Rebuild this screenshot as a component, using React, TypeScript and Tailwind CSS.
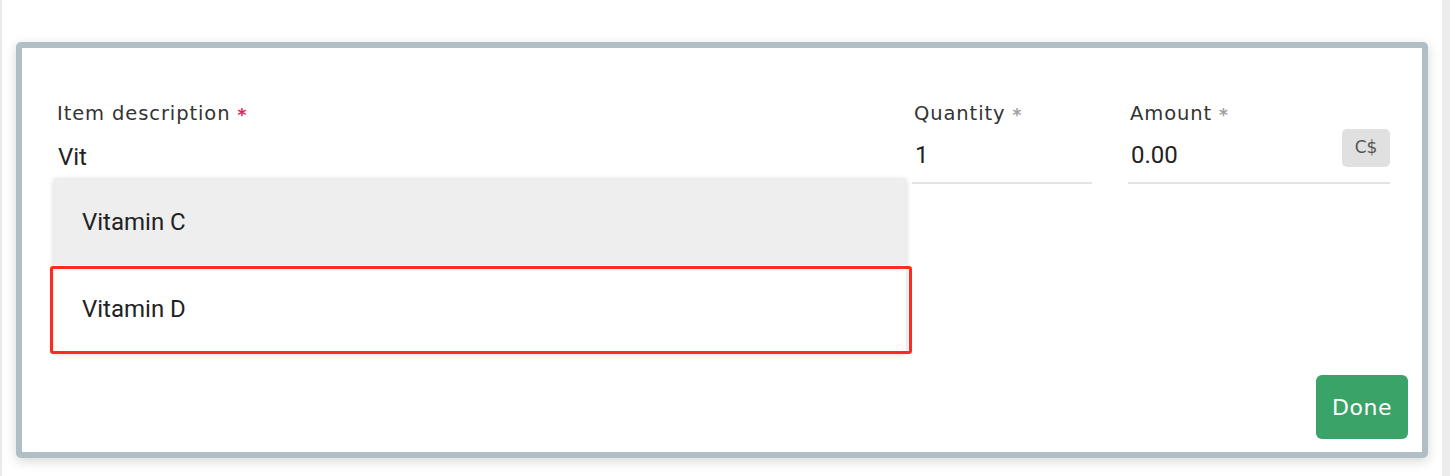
import React from 'react';

const labelFont = { fontFamily: '"DejaVu Sans", "Open Sans", sans-serif' };

interface FieldProps {
  label: string;
  value: string;
  required?: 'red' | 'gray';
  underline?: boolean;
  suffix?: string;
  className?: string;
}

const Field: React.FC<FieldProps> = ({ label, value, required, underline = true, suffix, className }) => {
  return (
    <div className={className}>
      <div
        className="flex items-baseline pl-[2px] text-[19.5px] leading-[26px] text-[#333333] tracking-[0.9px]"
        style={labelFont}
      >
        <span>{label}</span>
        {required && (
          <span
            className={
              'relative top-[1px] ml-[7px] text-[17px] font-bold ' +
              (required === 'red' ? 'text-[#e0245e]' : 'text-[#a0a0a0]')
            }
          >
            *
          </span>
        )}
      </div>
      <div
        className={
          'relative flex h-[57px] items-end pb-[13px] ' + (underline ? 'border-b-2 border-[#e3e3e3]' : '')
        }
      >
        <span className="pl-[3px] font-['Roboto',sans-serif] text-[24px] leading-[28px] text-[#222222]">
          {value}
        </span>
        {suffix && (
          <span
            className="absolute right-0 top-[2px] flex h-[38px] w-[48px] items-center justify-center rounded-[5px] bg-[#e0e0e0] text-[17px] text-[#555555]"
            style={labelFont}
          >
            {suffix}
          </span>
        )}
      </div>
    </div>
  );
};

export default function App() {
  const suggestions = ['Vitamin C', 'Vitamin D'];

  return (
    <div className="flex h-[476px] w-[1450px] overflow-hidden bg-white">
      <div className="w-[2px] bg-[#e9e9e9]" />
      <div className="flex-1 pl-[14px] pr-[14px] pt-[42px]">
        <div className="relative flex h-[416px] w-[1412px] flex-col rounded-[5px] border-[6px] border-[#b0bec5] bg-white shadow-[0_3px_12px_rgba(0,0,0,0.16)]">
          <div className="flex gap-[36px] pl-[33px] pr-[32px] pt-[53px]">
            <Field label="Item description" value="Vit" required="red" underline={false} className="flex-1" />
            <Field label="Quantity" value="1" required="gray" className="w-[180px]" />
            <Field label="Amount" value="0.00" required="gray" suffix="C$" className="w-[262px]" />
          </div>

          <div className="mt-auto flex justify-end pb-[13px] pr-[14px]">
            <button
              className="h-[64px] w-[92px] rounded-[6px] bg-[#3aa367] text-[22px] tracking-[0.5px] text-white"
              style={labelFont}
            >
              Done
            </button>
          </div>

          {/* autocomplete list */}
          <div className="absolute left-[32px] top-[130px] w-[852px] bg-white shadow-[0_2px_6px_rgba(0,0,0,0.18)]">
            {suggestions.map((s, i) => (
              <div
                key={s}
                className={
                  'flex h-[87px] items-center pl-[28px] font-["Roboto",sans-serif] text-[24px] text-[#222222] ' +
                  (i === 0 ? 'bg-[#eeeeee]' : 'bg-white')
                }
              >
                {s}
              </div>
            ))}
          </div>

          {/* highlight annotation */}
          <div className="absolute left-[28px] top-[218px] h-[88px] w-[862px] rounded-[3px] border-[3px] border-[#ff2b22]" />
        </div>
      </div>
      <div className="w-[8px] bg-[#ececec]" />
    </div>
  );
}
